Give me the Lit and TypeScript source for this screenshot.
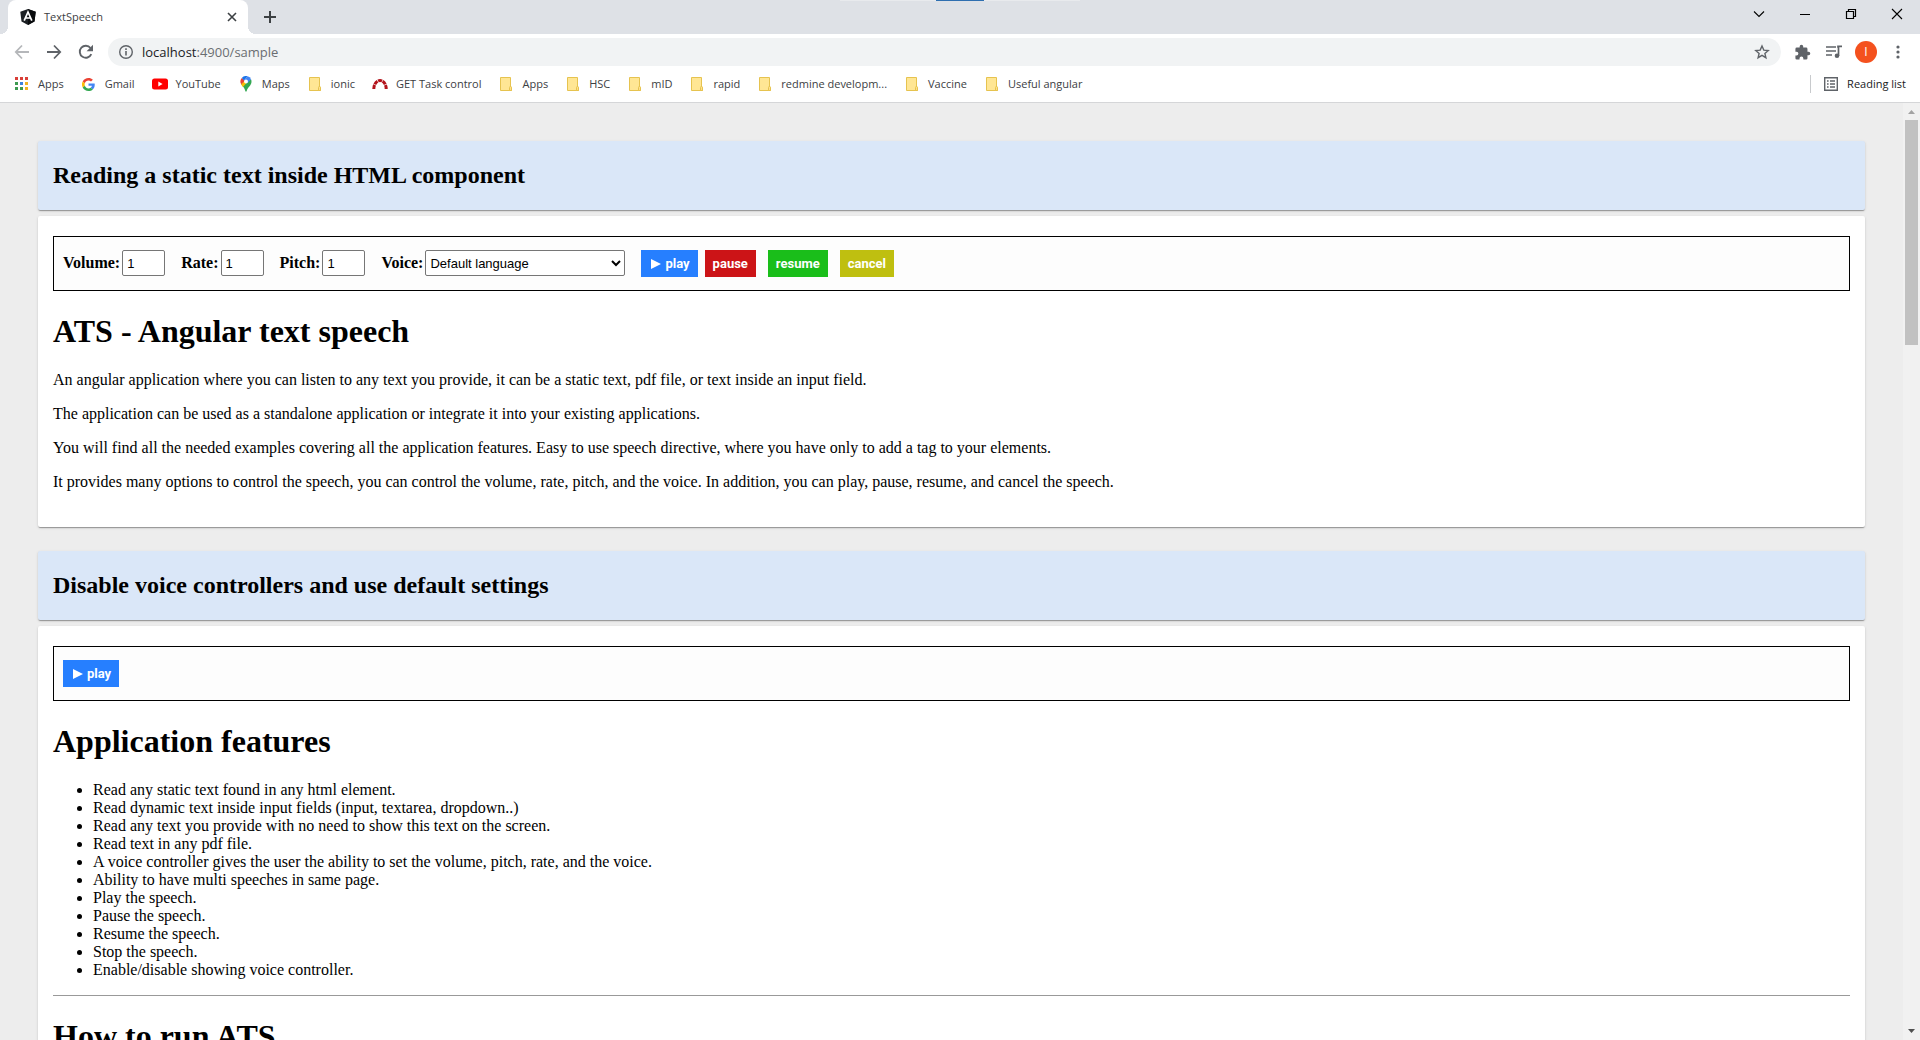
import { LitElement, html, css, svg } from "lit";
import { customElement, property } from "lit/decorators.js";

const folderIcon = svg`<svg viewBox="0 0 16 16" width="16" height="16" aria-hidden="true">
  <path d="M2.500 1.500h10v9l1 1v3h-11z" fill="#ffe694" stroke="#e6c34f"/>
  <path d="M11.500 14.500v-3l1-1.500 1 1.500v3z" fill="#ffe08a" stroke="#e6c34f"/>
</svg>`;

const appsIcon = svg`<svg viewBox="0 0 16 16" width="16" height="16" aria-hidden="true">
  <g fill="#d93f38"><path d="M1 1h3v3H1zM6 1h3v3H6zM11 1h3v3h-3z"/></g>
  <path d="M1 6h3v3H1z" fill="#3d9a50"/><path d="M6 6h3v3H6z" fill="#3b82e0"/><path d="M11 6h3v3h-3z" fill="#f0b323"/>
  <path d="M1 11h3v3H1zM6 11h3v3H6z" fill="#3d9a50"/><path d="M11 11h3v3h-3z" fill="#f0b323"/>
</svg>`;

const googleIcon = svg`<svg viewBox="0 0 48 48" width="13" height="13" aria-hidden="true">
  <path fill="#ea4335" d="M24 9.500c3.500 0 6.700 1.200 9.200 3.600l6.900-6.900C35.900 2.400 30.500 0 24 0 14.600 0 6.500 5.400 2.600 13.200l8 6.200C12.400 13.700 17.700 9.500 24 9.500z"/>
  <path fill="#4285f4" d="M47 24.500c0-1.600-.2-3.100-.4-4.500H24v9h12.900c-.6 3-2.300 5.500-4.800 7.200l7.700 6C44.400 38 47 31.800 47 24.500z"/>
  <path fill="#fbbc05" d="M10.500 28.600a14.500 14.500 0 0 1 0-9.200l-8-6.200a24 24 0 0 0 0 21.600z"/>
  <path fill="#34a853" d="M24 48c6.500 0 11.900-2.100 15.900-5.800l-7.700-6c-2.200 1.500-4.900 2.300-8.200 2.300-6.300 0-11.600-4.200-13.500-9.900l-8 6.200C6.500 42.600 14.600 48 24 48z"/>
</svg>`;

const youtubeIcon = svg`<svg viewBox="0 0 16 16" width="16" height="16" aria-hidden="true">
  <rect x="0" y="2.500" width="16" height="11" rx="2.500" fill="#f00"/><path d="M6.300 5.500v5l4.300-2.500z" fill="#fff"/>
</svg>`;

const mapsIcon = svg`<svg viewBox="0 0 16 16" width="16" height="16" aria-hidden="true">
  <path d="M3 7.800C4 10 6 11 7 14c.3 1 .5 1.700 1 1.700s.7-.7 1-1.700c1-3 4.500-4.500 4.500-8.500 0-1-.2-1.700-.5-2.300z" fill="#34a853"/>
  <path d="M3.200 8.300c.5 1 1.100 1.800 1.800 2.600l5-5.900L6 4z" fill="#fbbc04"/>
  <path d="M3.800 2 7 4.800 3.200 8.300A5.400 5.400 0 0 1 3.800 2z" fill="#ea4335"/>
  <path d="M3.800 2A5.500 5.500 0 0 1 9.700.3L6 4.500z" fill="#1a73e8"/>
  <path d="M9.700.3A5.500 5.500 0 0 1 13 3.200L9.800 7 6 4.500z" fill="#4285f4"/>
  <circle cx="8" cy="5.500" r="2" fill="#fff"/>
</svg>`;

const redmineIcon = svg`<svg viewBox="0 0 16 16" width="16" height="16" aria-hidden="true">
  <path d="M1.800 13A6.200 8.500 0 0 1 14.200 13" fill="none" stroke="#b3131b" stroke-width="3" stroke-dasharray="4.100 .65"/>
</svg>`;

const angularIcon = svg`<svg viewBox="0 0 16 16" width="16" height="16" aria-hidden="true">
  <path d="M8 0l7.700 2.700-1.200 9.800L8 16l-6.500-3.500L.3 2.700z" fill="#1c2024"/><path d="M8 0l7.700 2.700-1.200 9.800L8 16z" fill="#090b0d"/>
  <path d="M4.200 11.700 8 3l3.800 8.700M5.600 9h4.800" fill="none" stroke="#fff" stroke-width="1.700"/>
</svg>`;

const triangleIcon = svg`<svg viewBox="0 0 10 10" width="10" height="10" aria-hidden="true"><path d="M0 0l10 5-10 5z" fill="#fff"/></svg>`;

const stroke = (d: string, size = 16, width = 2) => svg`<svg viewBox="0 0 16 16" width=${size} height=${size} fill="none"
  stroke="currentColor" stroke-width=${width} aria-hidden="true"><path d=${d}/></svg>`;

const bookmarks = [
  { label: "Apps", icon: appsIcon },
  { label: "Gmail", icon: googleIcon },
  { label: "YouTube", icon: youtubeIcon },
  { label: "Maps", icon: mapsIcon },
  { label: "ionic", icon: folderIcon },
  { label: "GET Task control", icon: redmineIcon },
  { label: "Apps", icon: folderIcon },
  { label: "HSC", icon: folderIcon },
  { label: "mID", icon: folderIcon },
  { label: "rapid", icon: folderIcon },
  { label: "redmine developm...", icon: folderIcon },
  { label: "Vaccine", icon: folderIcon },
  { label: "Useful angular", icon: folderIcon },
];

const features = [
  "Read any static text found in any html element.",
  "Read dynamic text inside input fields (input, textarea, dropdown..)",
  "Read any text you provide with no need to show this text on the screen.",
  "Read text in any pdf file.",
  "A voice controller gives the user the ability to set the volume, pitch, rate, and the voice.",
  "Ability to have multi speeches in same page.",
  "Play the speech.",
  "Pause the speech.",
  "Resume the speech.",
  "Stop the speech.",
  "Enable/disable showing voice controller.",
];

@customElement("browser-chrome")
class BrowserChrome extends LitElement {
  static styles = css`
    :host { display: block; font-family: "Open Sans", "Noto Sans", sans-serif; font-size: 11px; color: #3c4043; background: #fff; border-bottom: 1px solid #d5d6d8; }
    button { border: 0; padding: 0; background: none; color: inherit; font: inherit; display: flex; align-items: center; justify-content: center; }
    svg { display: block; flex: none; }
    .strip { position: relative; display: flex; height: 34px; padding-left: 8px; background: #dee1e6; }
    .strip::before { content: ""; position: absolute; top: 0; left: 50%; width: 240px; height: 1px; margin-left: -120px; background: linear-gradient(90deg, #e8eaed 96px, #2f6fb0 96px, #2f6fb0 144px, #e8eaed 144px); }
    .tab { position: relative; box-sizing: border-box; display: flex; align-items: center; gap: 8px; width: 240px; height: 34px; padding: 0 8px 0 12px; background: #fff; border-radius: 8px 8px 0 0; }
    .tab::before, .tab::after { content: ""; position: absolute; bottom: 0; width: 8px; height: 8px; }
    .tab::before { left: -8px; background: radial-gradient(circle at 0 0, #dee1e6 8px, #fff 8px); }
    .tab::after { right: -8px; background: radial-gradient(circle at 100% 0, #dee1e6 8px, #fff 8px); }
    .title { flex: 1; }
    .tab button { width: 16px; height: 16px; }
    .new { width: 28px; height: 34px; margin-left: 8px; }
    .windows { display: flex; margin-left: auto; color: #000; }
    .windows button { width: 46px; height: 28px; }
    .tools { display: flex; align-items: center; height: 28px; padding: 4px 6px 0; color: #5f6368; }
    .tools button { width: 32px; height: 28px; }
    .tools .dim { color: #b5b7ba; }
    .omnibox { flex: 1; display: flex; align-items: center; gap: 8px; height: 28px; margin: 0 5px 0 6px; padding-left: 10px; background: #f1f3f4; border-radius: 14px; }
    .omnibox .star { width: 38px; }
    .url { flex: 1; font-size: 13px; color: #6a6e72; }
    .host { color: #202124; }
    .avatar { display: flex; align-items: center; justify-content: center; width: 22px; height: 22px; border-radius: 50%; background: #f4511e; color: #fff; font-size: 12px; }
    .marks { display: flex; align-items: center; height: 36px; padding: 0 14px; }
    .marks nav { display: flex; gap: 17px; }
    .marks a { display: flex; align-items: center; gap: 8px; color: inherit; text-decoration: none; white-space: nowrap; }
    .icon { display: flex; align-items: center; justify-content: center; width: 16px; height: 16px; }
    .marks .reading { display: flex; gap: 8px; height: 18px; margin-left: auto; padding-left: 12px; border-left: 1px solid #c8cacd; color: #202124; }
  `;

  render() {
    return html`
      <div class="strip">
        <div class="tab">
          ${angularIcon}<span class="title">TextSpeech</span>
          <button aria-label="Close tab">${stroke("M4 4l8 8M12 4l-8 8", 16, 1.6)}</button>
        </div>
        <button class="new" aria-label="New tab">${stroke("M8 2v12M2 8h12", 16, 2)}</button>
        <div class="windows">
          <button aria-label="Search tabs">${stroke("M3 5.500l5 5 5-5", 16, 1.1)}</button>
          <button aria-label="Minimize">${stroke("M3 8.500h10", 16, 1)}</button>
          <button aria-label="Restore">${stroke("M3.500 5.500h7v7h-7zM5.500 5.500v-2h7v7h-2", 16, 1.2)}</button>
          <button aria-label="Close">${stroke("M3 3l10 10M13 3L3 13", 16, 1.1)}</button>
        </div>
      </div>
      <div class="tools">
        <button class="dim" aria-label="Back">${stroke("M15 8H2M8 1.500L1.800 8 8 14.500", 16, 1.8)}</button>
        <button aria-label="Forward">${stroke("M1 8h13M8 1.500L14.200 8 8 14.500", 16, 1.8)}</button>
        <button aria-label="Reload">
          <svg viewBox="0 0 16 16" width="16" height="16" aria-hidden="true"><path d="M13.300 10.200A6 6 0 1 1 12.500 4" fill="none" stroke="currentColor" stroke-width="1.900"/><path d="M15 .8v6.400H8.600z" fill="currentColor"/></svg>
        </button>
        <div class="omnibox">
          <svg viewBox="0 0 16 16" width="16" height="16" aria-hidden="true"><circle cx="8" cy="8" r="6.300" fill="none" stroke="currentColor" stroke-width="1.400"/><path d="M7.200 7h1.600v4.500H7.200zM7.200 4.300h1.600v1.600H7.200z" fill="currentColor"/></svg>
          <span class="url"><span class="host">localhost</span>:4900/sample</span>
          <button class="star" aria-label="Bookmark this tab">${stroke("M8 2l1.800 4.100 4.400.4-3.300 2.900 1 4.300L8 11.400l-3.900 2.300 1-4.300-3.300-2.900 4.400-.4z", 16, 1.4)}</button>
        </div>
        <button aria-label="Extensions">
          <svg viewBox="0 0 24 24" width="17" height="17" aria-hidden="true"><path fill="currentColor" d="M20.500 11H19V7a2 2 0 0 0-2-2h-4V3.500a2.500 2.500 0 0 0-5 0V5H4a2 2 0 0 0-2 2v3.800h1.500a2.700 2.700 0 0 1 0 5.400H2V20a2 2 0 0 0 2 2h3.800v-1.500a2.700 2.700 0 0 1 5.400 0V22H17a2 2 0 0 0 2-2v-4h1.500a2.500 2.500 0 0 0 0-5z"/></svg>
        </button>
        <button aria-label="Media controls">
          <svg viewBox="0 0 16 16" width="16" height="16" aria-hidden="true"><path d="M0 3h10M0 7h10M0 11h6" stroke="currentColor" stroke-width="1.600"/><path d="M16 2.300h-4v1.500M12.500 2.300V12" fill="none" stroke="currentColor" stroke-width="1.700"/><circle cx="11" cy="11.800" r="2.300" fill="currentColor"/></svg>
        </button>
        <button aria-label="Profile"><span class="avatar">I</span></button>
        <button aria-label="Menu">
          <svg viewBox="0 0 16 16" width="16" height="16" fill="currentColor" aria-hidden="true"><circle cx="8" cy="3" r="1.600"/><circle cx="8" cy="8" r="1.600"/><circle cx="8" cy="13" r="1.600"/></svg>
        </button>
      </div>
      <div class="marks">
        <nav aria-label="Bookmarks">
          ${bookmarks.map((b) => html`<a href="#"><span class="icon">${b.icon}</span>${b.label}</a>`)}
        </nav>
        <button class="reading">
          <svg viewBox="0 0 16 16" width="16" height="16" aria-hidden="true"><path d="M1.700 1.700h12.600v12.600H1.700z" fill="none" stroke="#5f6368" stroke-width="1.400"/><path d="M4 5h1.600M4 8h1.600M4 11h1.600M7 5h5M7 8h5M7 11h5" stroke="#5f6368" stroke-width="1.400"/></svg>
          Reading list
        </button>
      </div>
    `;
  }
}

@customElement("voice-controller")
class VoiceController extends LitElement {
  @property({ type: Boolean }) full = false;

  static styles = css`
    :host { display: flex; align-items: flex-start; padding: 13px 9px; border: 1px solid #000; background: #fdfdfd; }
    .field { display: flex; gap: 2px; margin-right: 16px; }
    label { font-weight: bold; line-height: 26px; }
    input, select { box-sizing: border-box; height: 26px; margin: 0; border: 1px solid #767676; border-radius: 2px; background: #fff; color: #000; font: 13px "Liberation Sans", Arial, sans-serif; }
    input { width: 43px; padding: 0 4px; }
    select { width: 200px; padding: 0; }
    .actions { display: flex; gap: 12px; }
    .first { display: flex; gap: 7px; }
    button { display: flex; align-items: center; gap: 4px; height: 27px; padding: 0 8px; border: 0; color: #fff; font: bold 13px Roboto, "Liberation Sans", sans-serif; }
    .play { background: #267fff; padding-left: 10px; }
    .pause { background: #cc1417; }
    .resume { background: #1abe1a; }
    .cancel { background: #bfbf10; }
  `;

  private number(id: string, label: string) {
    return html`<div class="field"><label for=${id}>${label}:</label><input id=${id} type="number" value="1" /></div>`;
  }

  render() {
    const play = html`<button class="play">${triangleIcon}play</button>`;
    if (!this.full) return play;
    return html`
      ${this.number("volume", "Volume")} ${this.number("rate", "Rate")} ${this.number("pitch", "Pitch")}
      <div class="field">
        <label for="voice">Voice:</label>
        <select id="voice"><option>Default language</option></select>
      </div>
      <div class="actions">
        <div class="first">${play}<button class="pause">pause</button></div>
        <button class="resume">resume</button>
        <button class="cancel">cancel</button>
      </div>
    `;
  }
}

@customElement("app-root")
class AppRoot extends LitElement {
  static styles = css`
    :host { display: flex; flex-direction: column; height: 100vh; overflow: hidden; font: 16px/18px "Liberation Serif", "Times New Roman", serif; color: #000; }
    browser-chrome { flex: none; }
    .view { flex: 1; min-height: 0; display: flex; background: #ededed; }
    main { flex: 1; overflow: hidden; padding: 38px 38px 0; }
    section { margin-bottom: 24px; }
    .head, .body { border-radius: 2px; box-shadow: 0 2px 1px -1px rgba(0, 0, 0, 0.2), 0 1px 1px rgba(0, 0, 0, 0.14), 0 1px 3px rgba(0, 0, 0, 0.12); }
    .head { padding: 21px 15px; margin-bottom: 6px; background: #dae7f8; }
    .body { padding: 20px 15px; background: #fff; }
    h2 { margin: 0; font-size: 24px; line-height: 27px; }
    h1 { margin: 22px 0 21px; font-size: 32px; line-height: 37px; }
    p { margin: 16px 0; }
    ul { margin: 16px 0; padding-left: 40px; }
    hr { margin: 16px 0; border: 0; height: 1px; background: #999; }
    .bar { display: flex; flex-direction: column; align-items: center; width: 17px; background: #f1f1f1; }
    .thumb { width: 13px; height: 24%; background: #c1c1c1; }
    .arrow { display: block; height: 17px; }
    .down { margin-top: auto; }
  `;

  render() {
    return html`
      <browser-chrome></browser-chrome>
      <div class="view">
        <main>
          <section>
            <div class="head"><h2>Reading a static text inside HTML component</h2></div>
            <div class="body">
              <voice-controller full></voice-controller>
              <h1>ATS - Angular text speech</h1>
              <p>An angular application where you can listen to any text you provide, it can be a static text, pdf file, or text inside an input field.</p>
              <p>The application can be used as a standalone application or integrate it into your existing applications.</p>
              <p>You will find all the needed examples covering all the application features. Easy to use speech directive, where you have only to add a tag to your elements.</p>
              <p>It provides many options to control the speech, you can control the volume, rate, pitch, and the voice. In addition, you can play, pause, resume, and cancel the speech.</p>
            </div>
          </section>
          <section>
            <div class="head"><h2>Disable voice controllers and use default settings</h2></div>
            <div class="body">
              <voice-controller></voice-controller>
              <h1>Application features</h1>
              <ul>${features.map((f) => html`<li>${f}</li>`)}</ul>
              <hr />
              <h1>How to run ATS</h1>
            </div>
          </section>
        </main>
        <div class="bar">
          <svg class="arrow" viewBox="0 0 17 17" width="17" height="17" aria-hidden="true"><path d="M5 11l3.500-4 3.500 4z" fill="#a3a3a3"/></svg>
          <div class="thumb"></div>
          <svg class="arrow down" viewBox="0 0 17 17" width="17" height="17" aria-hidden="true"><path d="M5 6l3.500 4 3.500-4z" fill="#505050"/></svg>
        </div>
      </div>
    `;
  }
}
